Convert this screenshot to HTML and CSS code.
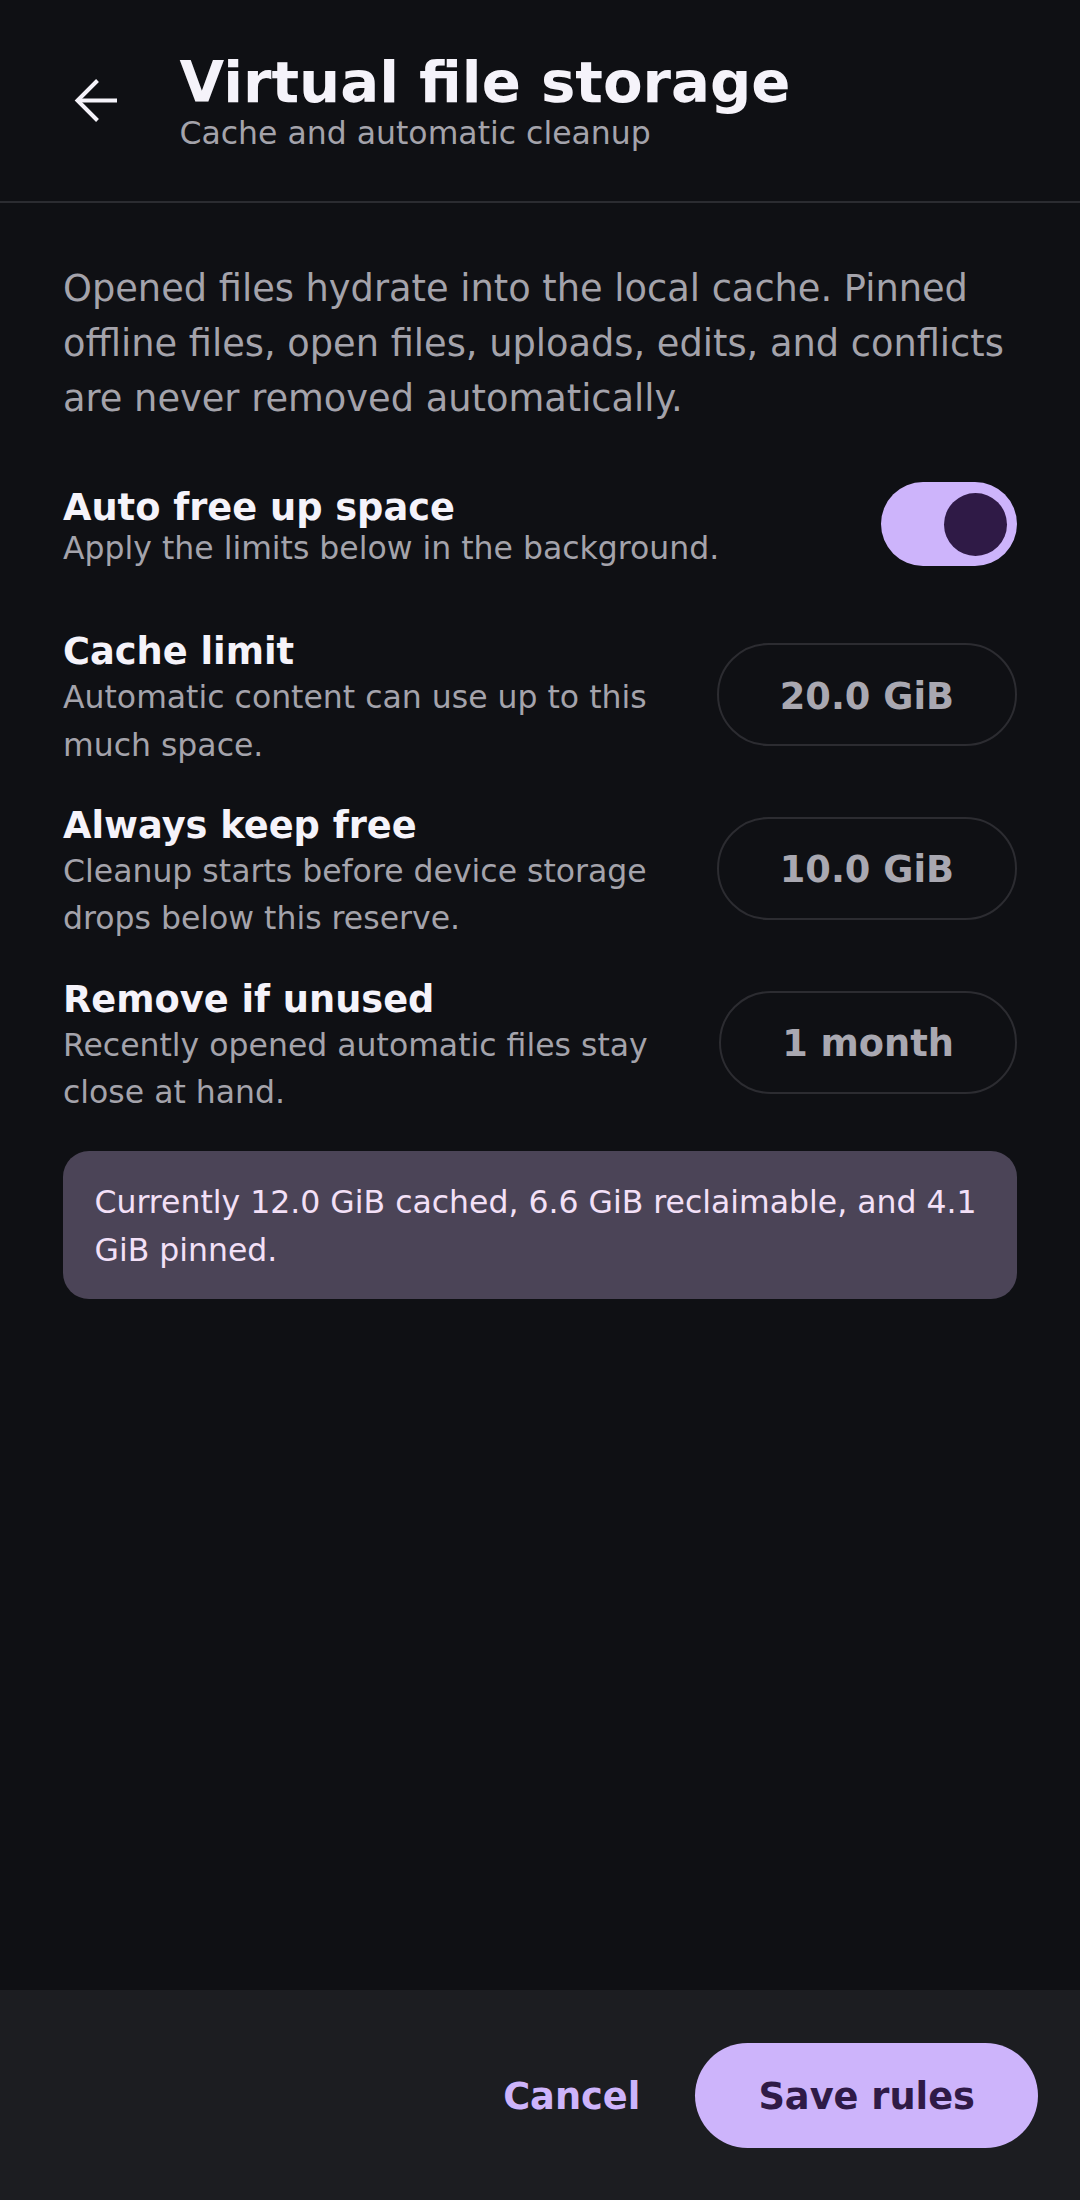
FILE: index.html
```html
<!DOCTYPE html>
<html lang="en">
<head>
<meta charset="utf-8">
<title>Virtual file storage</title>
<link rel="stylesheet" href="styles.css">
</head>
<body>
<div class="screen">
  <header class="topbar">
    <button class="back" aria-label="Back">
      <svg width="44" height="44" viewBox="0 0 44 44" aria-hidden="true">
        <path d="M43 21.5H3" fill="none" stroke="#f5f3fa" stroke-width="4"/>
        <path d="M23.5 1.5L3.5 21.5L23.5 41.5" fill="none" stroke="#f5f3fa" stroke-width="4"/>
      </svg>
    </button>
    <div class="titles">
      <h1 class="title">Virtual file storage</h1>
      <p class="subtitle">Cache and automatic cleanup</p>
    </div>
  </header>

  <main class="content">
    <p class="intro">Opened files hydrate into the local cache. Pinned offline files, open files, uploads, edits, and conflicts are never removed automatically.</p>

    <div class="toggle-row">
      <div class="row-text toggle-text">
        <div class="label">Auto free up space</div>
        <div class="hint hint-tight">Apply the limits below in the background.</div>
      </div>
      <div class="switch" role="switch" aria-checked="true"><span class="thumb"></span></div>
    </div>

    <div class="limits">
      <div class="limit-row">
        <div class="row-text limit-text">
          <div class="label">Cache limit</div>
          <div class="hint">Automatic content can use up to this much space.</div>
        </div>
        <button class="value">20.0 GiB</button>
      </div>
      <div class="limit-row">
        <div class="row-text limit-text">
          <div class="label">Always keep free</div>
          <div class="hint">Cleanup starts before device storage drops below this reserve.</div>
        </div>
        <button class="value">10.0 GiB</button>
      </div>
      <div class="limit-row">
        <div class="row-text limit-text">
          <div class="label">Remove if unused</div>
          <div class="hint">Recently opened automatic files stay close at hand.</div>
        </div>
        <button class="value">1 month</button>
      </div>
      <div class="summary">Currently 12.0 GiB cached, 6.6 GiB reclaimable, and 4.1 GiB pinned.</div>
    </div>
  </main>

  <footer class="actions">
    <button class="btn-text">Cancel</button>
    <button class="btn-filled">Save rules</button>
  </footer>
</div>
</body>
</html>
```

FILE: styles.css
```css
* {
  box-sizing: border-box;
}

html, body {
  margin: 0;
  padding: 0;
  background: #0f1014;
}

body {
  font-family: "DejaVu Sans", "Noto Sans", sans-serif;
  color: #f5f3fa;
}

.screen {
  width: 1080px;
  height: 2200px;
  display: flex;
  flex-direction: column;
  background: #0f1014;
}

/* Top bar */
.topbar {
  height: 202.6px;
  flex: none;
  display: flex;
  align-items: center;
  gap: 20.5px;
  padding: 0 0 0 33px;
  border-bottom: 2.6px solid #2b2c31;
}

.back {
  width: 126px;
  height: 126px;
  flex: none;
  display: flex;
  align-items: center;
  justify-content: center;
  background: transparent;
  border: 0;
  padding: 0;
  margin-top: 1px;
}

.titles {
  align-self: flex-start;
  padding-top: 50px;
  display: flex;
  flex-direction: column;
}

.title {
  margin: 0;
  font-size: 57.75px;
  line-height: 65px;
  font-weight: 700;
  color: #f5f3fa;
}

.subtitle {
  margin: 0;
  font-size: 31.5px;
  line-height: 1.164;
  color: #a4a3ab;
}

/* Content */
.content {
  flex: 1;
  padding: 58px 63px 0;
  display: flex;
  flex-direction: column;
}

.intro {
  margin: 0;
  font-size: 36.75px;
  line-height: 55.1px;
  color: #a4a3ab;
}

.toggle-row {
  margin-top: 56px;
  display: flex;
  align-items: center;
  gap: 42px;
}

.row-text {
  flex: 1;
  min-width: 0;
  display: flex;
  flex-direction: column;
}

.toggle-text {
  padding-top: 5px;
}

.limit-text {
  padding-top: 2.5px;
}

.label {
  font-size: 36.75px;
  line-height: 1.164;
  font-weight: 700;
  color: #f5f3fa;
}

.hint {
  font-size: 31.5px;
  line-height: 47.25px;
  color: #a4a3ab;
}

.hint-tight {
  line-height: 1.164;
}

.switch {
  flex: none;
  width: 136.5px;
  height: 84px;
  border-radius: 42px;
  background: #cdb4fb;
  display: flex;
  align-items: center;
  justify-content: flex-end;
  padding: 0 10.5px;
}

.thumb {
  width: 63px;
  height: 63px;
  border-radius: 50%;
  background: #2f1a46;
}

.limits {
  margin-top: 62.7px;
  display: flex;
  flex-direction: column;
  gap: 34.1px;
}

.limit-row {
  display: flex;
  align-items: center;
  gap: 42px;
}

.value {
  flex: none;
  height: 103.5px;
  margin-bottom: 8.5px;
  padding: 3px 61px 0;
  border: 2.6px solid #2c2c31;
  border-radius: 52px;
  background: transparent;
  font-family: "DejaVu Sans", "Noto Sans", sans-serif;
  font-size: 36.75px;
  font-weight: 700;
  color: #a9a8b1;
}

.summary {
  background: #4b4457;
  border-radius: 26px;
  padding: 28.5px 31.5px 24.5px;
  font-size: 31.5px;
  line-height: 47.5px;
  color: #f3e0f7;
}

/* Bottom actions */
.actions {
  flex: none;
  height: 210px;
  background: #1c1d21;
  display: flex;
  align-items: center;
  justify-content: flex-end;
  gap: 23.5px;
  padding: 0 42px 0 0;
}

.btn-text,
.btn-filled {
  height: 105px;
  border: 0;
  border-radius: 52.5px;
  font-family: "DejaVu Sans", "Noto Sans", sans-serif;
  font-size: 36.75px;
  font-weight: 700;
  padding-top: 4px;
}

.btn-text {
  padding-left: 31.5px;
  padding-right: 31.5px;
  background: transparent;
  color: #cdb4fb;
}

.btn-filled {
  padding-left: 63px;
  padding-right: 63px;
  background: #cdb4fb;
  color: #2f1a46;
}
```
